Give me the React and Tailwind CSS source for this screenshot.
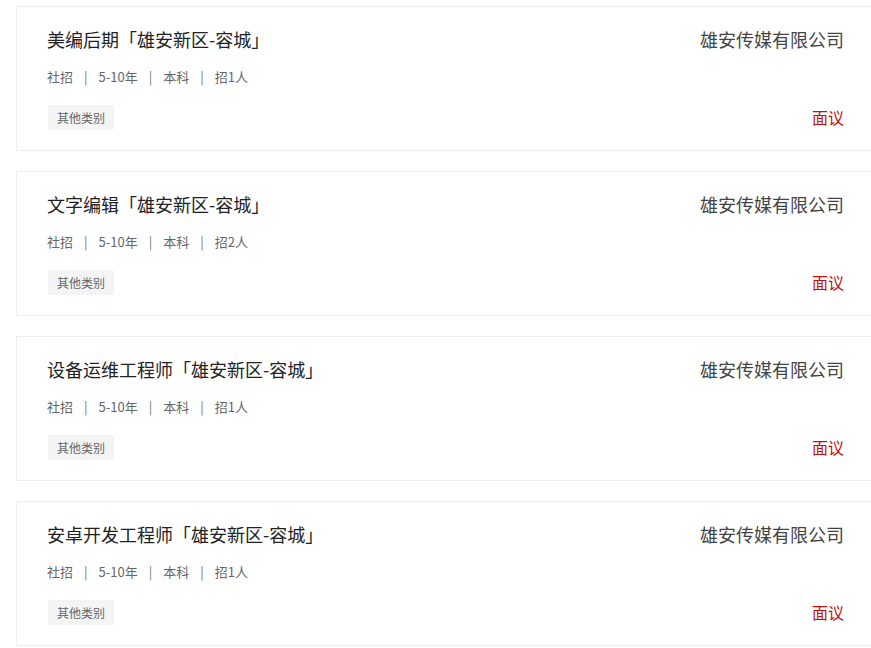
import React from 'react';

// 职位列表数据
const jobs = [
  { id: 1, title: '美编后期「雄安新区-容城」', type: '社招', exp: '5-10年', edu: '本科', count: '招1人' },
  { id: 2, title: '文字编辑「雄安新区-容城」', type: '社招', exp: '5-10年', edu: '本科', count: '招2人' },
  { id: 3, title: '设备运维工程师「雄安新区-容城」', type: '社招', exp: '5-10年', edu: '本科', count: '招1人' },
  { id: 4, title: '安卓开发工程师「雄安新区-容城」', type: '社招', exp: '5-10年', edu: '本科', count: '招1人' },
];

function Sep() {
  return <span className="px-[11px] text-[#777]">|</span>;
}

function JobCard({ job }) {
  return (
    <div className="w-[859px] border border-[#eeeeee] bg-white px-[30px] pt-[19px] pb-[20px] flex justify-between mb-5">
      <div className="flex flex-col">
        <div className="text-[18px] leading-[26px] text-[#222]">{job.title}</div>
        <div className="mt-[15px] text-[13px] leading-[20px] text-[#666] flex">
          <span>{job.type}</span>
          <Sep />
          <span>{job.exp}</span>
          <Sep />
          <span>{job.edu}</span>
          <Sep />
          <span>{job.count}</span>
        </div>
        <div className="mt-[18px] flex">
          <span className="ml-px bg-[#f4f4f4] rounded-[2px] px-[9px] h-[25px] leading-[25px] text-[12px] text-[#666]">其他类别</span>
        </div>
      </div>
      <div className="flex flex-col justify-between items-end">
        <div className="text-[18px] leading-[26px] text-[#444]">雄安传媒有限公司</div>
        <div className="text-[16px] leading-[25px] text-[#c40f0f]">面议</div>
      </div>
    </div>
  );
}

export default function App() {
  return (
    <div className="min-h-screen bg-white overflow-hidden pt-[6px] pl-4" style={{ fontFamily: '"Noto Sans CJK SC", "Noto Sans", sans-serif' }}>
      {jobs.map(job => <JobCard key={job.id} job={job} />)}
    </div>
  );
}
